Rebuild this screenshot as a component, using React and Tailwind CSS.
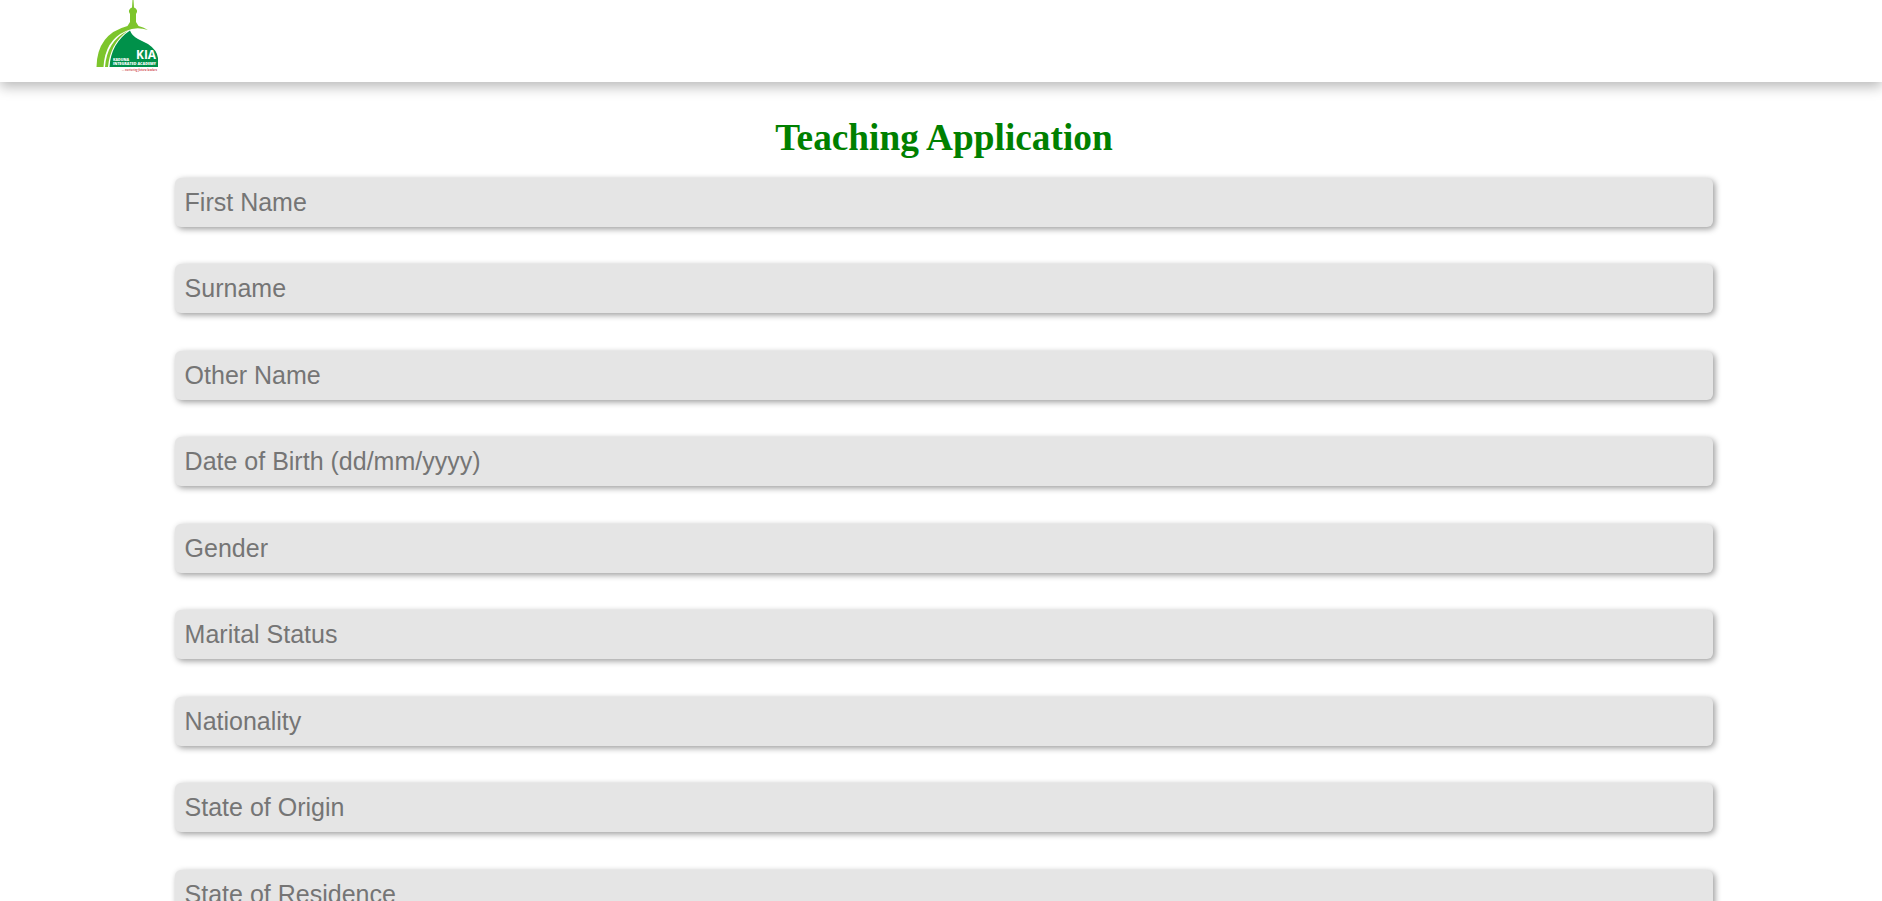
const fields = [
  "First Name", "Surname", "Other Name", "Date of Birth (dd/mm/yyyy)", "Gender",
  "Marital Status", "Nationality", "State of Origin", "State of Residence",
];

function Logo() {
  return (
    <svg width="66" height="74" viewBox="0 0 66 74" className="block overflow-visible" role="img" aria-label="KIA">
      <path d="M36.500 0H37.500L38 7.500Q41.500 9 41 12L40 14V22L42.500 26Q47 27 52 30Q40 26 30 31Q9 40 7.500 67H.5Q1 34 31.500 26L34 22V14L33 12Q32.500 9 36 7.500Z" fill="#7dc52c" />
      <path d="M9 67Q11 41 31.500 31Q14 44 12 67Z" fill="#7dc52c" />
      <path d="M13.500 67Q15 43 34 30.500Q36 36 42 39L52 44Q61 50 62 58V67Z" fill="#00914a" />
      <text x="40" y="59" fill="#fff" textLength="20" lengthAdjust="spacingAndGlyphs" className="font-['Open_Sans',sans-serif] text-[11.5px] font-bold">KIA</text>
      <text x="17" y="60.500" fill="#fff" textLength="16" lengthAdjust="spacingAndGlyphs" className="font-['Open_Sans',sans-serif] text-[4px] font-extrabold">KADUNA</text>
      <text x="17" y="65.200" fill="#fff" textLength="43" lengthAdjust="spacingAndGlyphs" className="font-['Open_Sans',sans-serif] text-[4px] font-extrabold">INTEGRATED ACADEMY</text>
      <text x="26" y="71" fill="#d56065" textLength="35" lengthAdjust="spacingAndGlyphs" className="font-['Open_Sans',sans-serif] text-[3.5px] font-bold italic">... nurturing future leaders</text>
    </svg>
  );
}

export default function App() {
  return (
    <div className="h-[901px] overflow-hidden bg-white">
      <header className="h-[82px] bg-white pl-24 shadow-[0_5px_12px_rgba(0,0,0,0.27)]">
        <Logo />
      </header>
      <main className="ml-[174.6px] w-[1538.6px] pt-[34px]">
        <h1 className="h-[61.9px] text-center font-['Liberation_Serif',serif] text-[37.3px] leading-[43px] font-bold text-[#008000]">Teaching Application</h1>
        <form className="flex flex-col gap-[37.75px]">
          {fields.map((name) => (
            <input key={name} placeholder={name} aria-label={name} className="block h-[48.75px] w-full shrink-0 rounded-[6px] bg-[#e5e5e5] px-2.5 font-['Liberation_Sans',sans-serif] text-[25px] text-[#757575] shadow-[2px_2px_6px_rgba(0,0,0,0.4)] placeholder:text-[#757575]" />
          ))}
        </form>
      </main>
    </div>
  );
}
